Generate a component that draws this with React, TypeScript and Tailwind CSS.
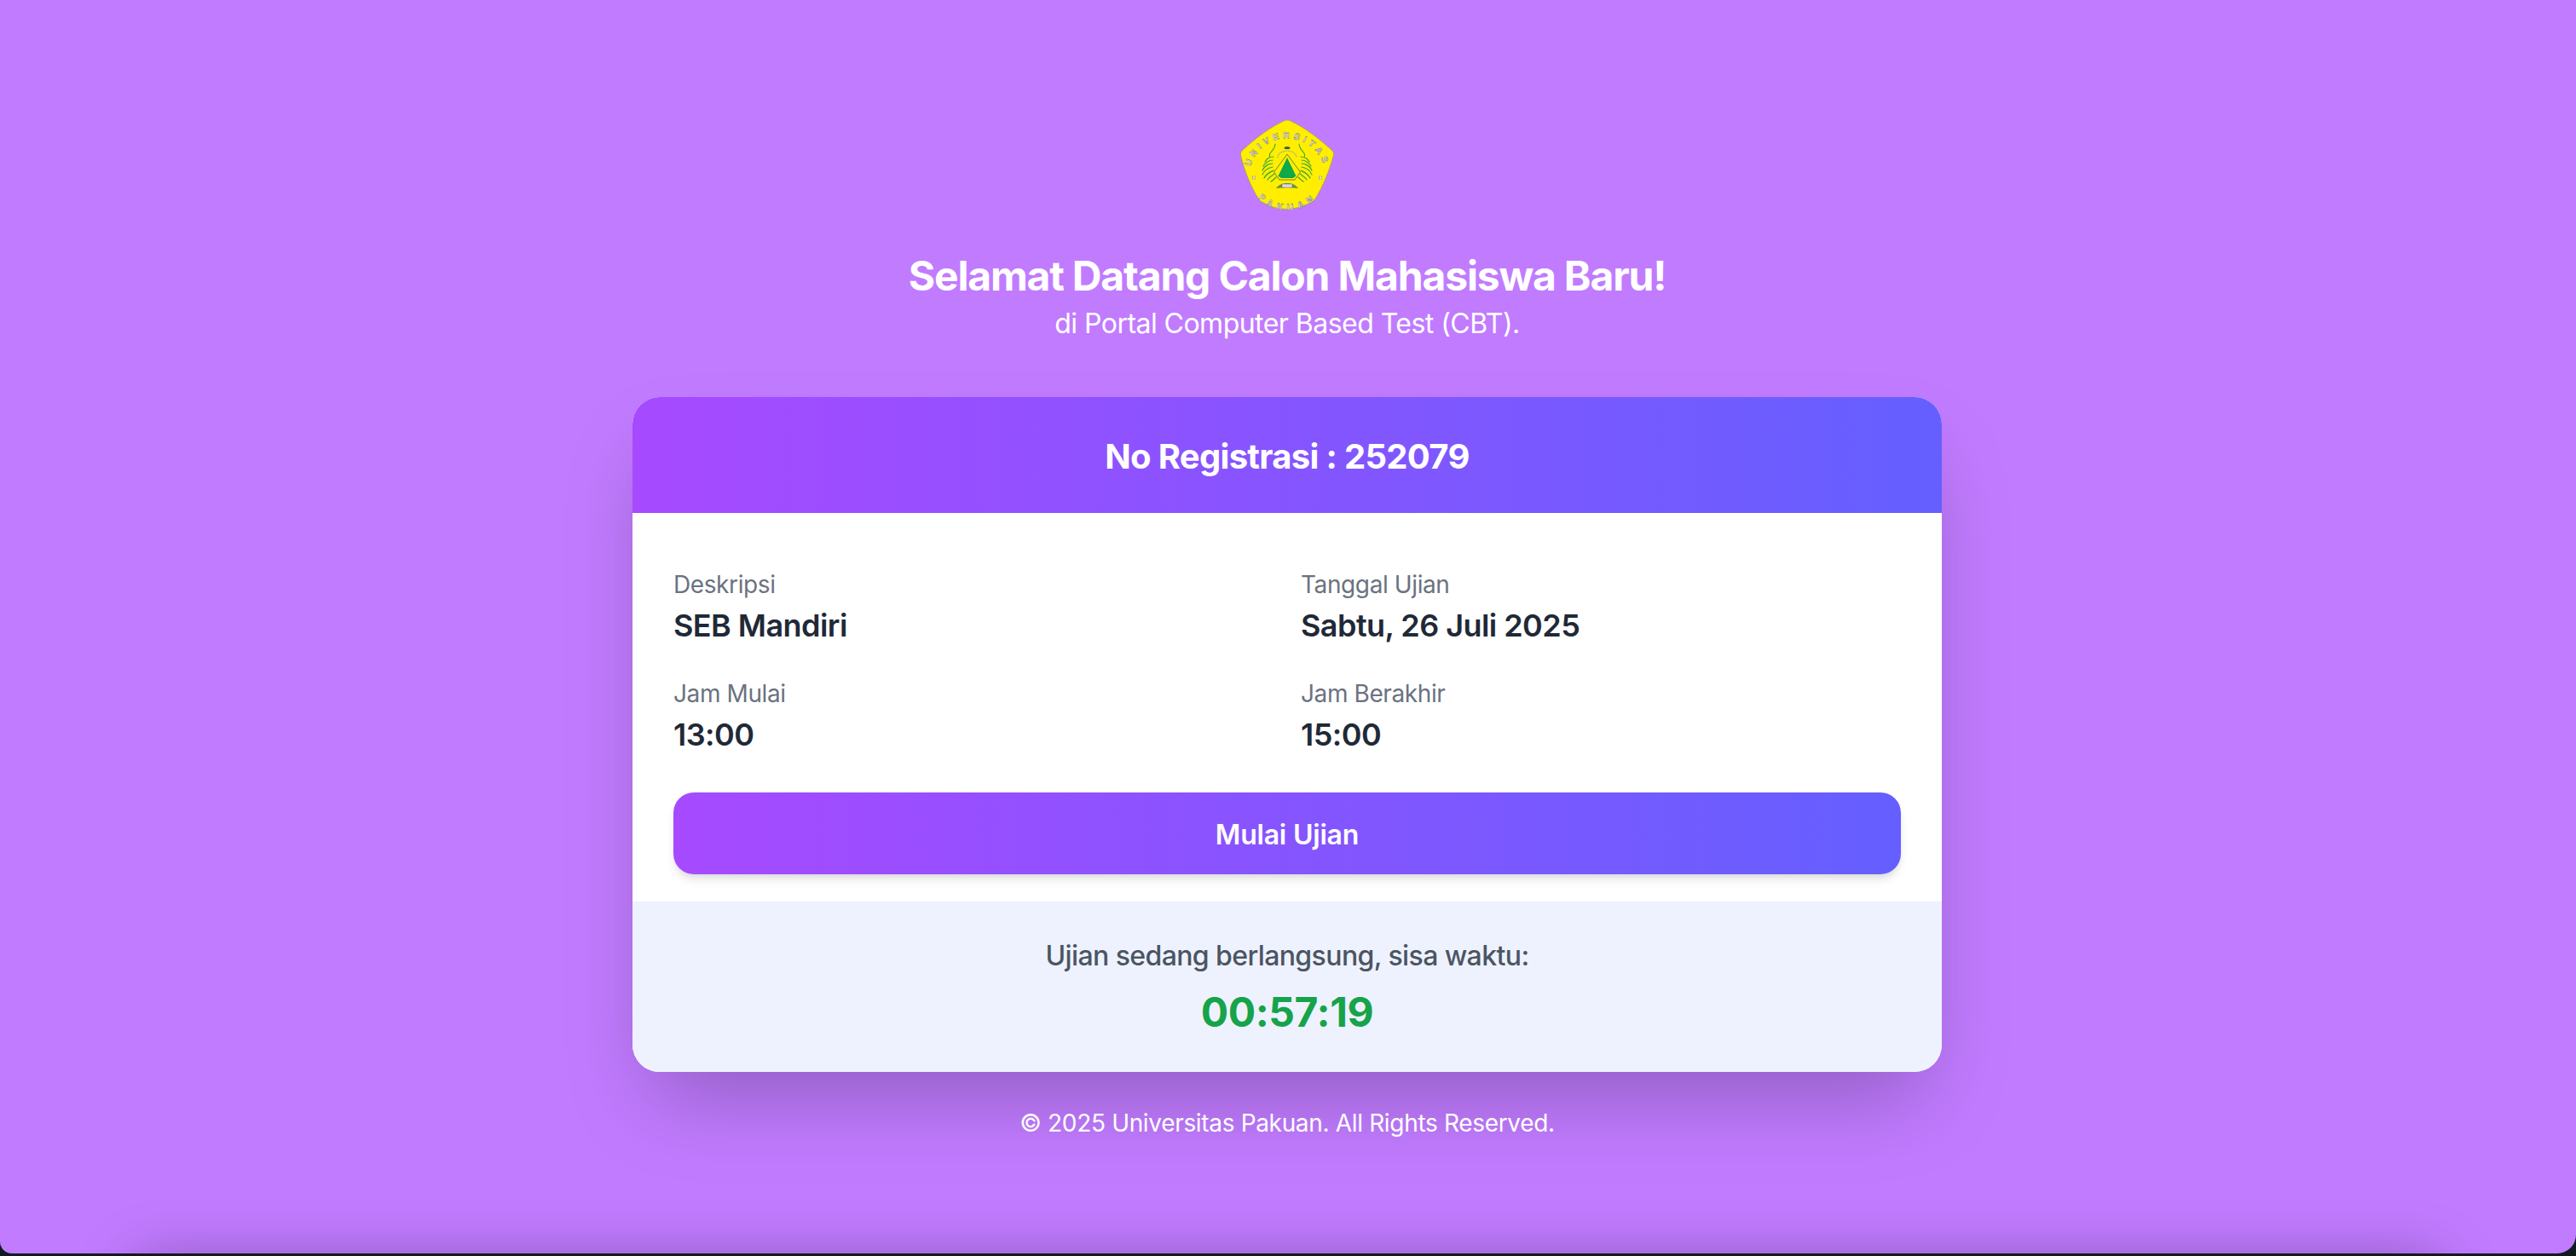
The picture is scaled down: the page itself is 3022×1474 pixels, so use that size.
import React from "react";

function Wing() {
  return (
    <g fill="none" strokeLinecap="round">
      <path d="M41 29c0 5-4 8-6 11-1 2-1 3 0 4" stroke="#3fa535" strokeWidth="1.100" />
      <path d="M39 44C35 44 31 46 29 50" stroke="#3fa535" strokeWidth="1.200" />
      <path d="M38 48C34 48 29 51 27 55" stroke="#4aa838" strokeWidth="1.200" />
      <path d="M38 52C33 52 28 55 26 60" stroke="#2fa540" strokeWidth="1.200" />
      <path d="M38 56C33 57 28 60 26 65" stroke="#4aa838" strokeWidth="1.200" />
      <path d="M39 60C35 62 30 64 28 69" stroke="#2fa540" strokeWidth="1.200" />
      <path d="M40 64C37 66 34 68 32 71" stroke="#4aa838" strokeWidth="1.200" />
      <path d="M42 68C40 70 38 72 36 73" stroke="#2fa540" strokeWidth="1.200" />
    </g>
  );
}

function Logo() {
  return (
    <svg viewBox="0 0 110 108" className="h-[108px] w-[110px]">
      <path
        d="M50 2.500C53 .5 57 .5 60 2.500 76 10 93 23 107 36c2.500 2.500 3 4 2.200 7-5 18-12 35-21 50-1.500 2.500-3 3.500-5.500 4.500-18 10-38 11-56 0-2.500-1-4-2-5.500-4.500C12 78 5 61 .8 43 0 40 .5 38.500 3 36 17 23 34 10 50 2.500z"
        fill="#ffee00"
        stroke="#a8a838"
        strokeWidth=".8"
      />
      <defs>
        <path id="logo-top" d="M10.500 67A44.500 44.500 0 0 1 99.500 67" />
        <path id="logo-bottom" d="M20 78A40 40 0 0 0 90 78" />
      </defs>
      <text fontFamily="Liberation Sans, sans-serif" fontWeight="700" fontSize="10.500" fill="#f4f4f4" stroke="#555" strokeWidth=".4" letterSpacing="4.300">
        <textPath href="#logo-top" startOffset="50%" textAnchor="middle">
          UNIVERSITAS
        </textPath>
      </text>
      <text fontFamily="Liberation Sans, sans-serif" fontWeight="700" fontSize="10.500" fill="#f4f4f4" stroke="#555" strokeWidth=".4" letterSpacing="3.500" dominantBaseline="hanging">
        <textPath href="#logo-bottom" startOffset="50%" textAnchor="middle">
          PAKUAN
        </textPath>
      </text>
      <rect x="14.500" y="67" width="3" height="3" fill="#eee" stroke="#777" strokeWidth=".5" />
      <rect x="92.500" y="67" width="3" height="3" fill="#eee" stroke="#777" strokeWidth=".5" />
      <Wing />
      <g transform="matrix(-1 0 0 1 110 0)">
        <Wing />
      </g>
      <ellipse cx="55" cy="33.500" rx="3.500" ry="1.600" fill="#33603f" />
      <path d="M44 45a11 8 0 0 1 22 0" fill="none" stroke="#999" strokeWidth="1.400" strokeDasharray="1 1" />
      <path d="M55 41 70.500 62 64 71H46l-6.500-9z" fill="#ffee00" stroke="#5c7a2c" strokeWidth=".9" />
      <path d="M55 45 65.500 66.500 62 69H48l-3.500-2.500z" fill="#0fa84a" />
      <path d="M42 81c3-4 7-6 13-6s10 2 13 6c-4 0-8-1-13-1s-9 1-13 1z" fill="#6f8f3a" />
      <path d="M49 76h12v4H49z" fill="#ddd" stroke="#666" strokeWidth=".5" />
    </svg>
  );
}

function Field({ label, value }: { label: string; value: string }) {
  return (
    <div>
      <p className="text-[28px] leading-[40px] tracking-[-0.4px] text-[#6b7280]">{label}</p>
      <p className="text-[36px] leading-[56px] font-semibold tracking-[-0.55px] text-[#1f2937]">{value}</p>
    </div>
  );
}

export default function App() {
  return (
    <div className="h-[1474px] w-[3022px] overflow-hidden bg-[#111a20] font-['Inter',sans-serif]">
      <div className="relative flex h-[1471px] flex-col items-center overflow-hidden rounded-br-[22px] rounded-bl-[14px] bg-[#c17bff] pt-[140px] pr-[2px] text-white">
        <Logo />
        <h1 className="mt-[44px] text-[48px] leading-[64px] font-bold tracking-[-1.17px]">
          Selamat Datang Calon Mahasiswa Baru!
        </h1>
        <p className="text-[32px] leading-[48px] tracking-[-0.53px]">di Portal Computer Based Test (CBT).</p>

        <div className="mt-[62px] w-[1536px] overflow-hidden rounded-[32px] bg-white shadow-[0_50px_100px_-24px_rgba(0,0,0,0.25)]">
          <div className="flex h-[136px] items-center justify-center bg-linear-to-r/srgb from-[#a74aff] to-[#655fff] pt-[3px] text-[40px] font-bold tracking-[-0.7px]">
            No Registrasi : 252079
          </div>
          <div className="px-[48px] pt-[64px] pb-[32px]">
            <div className="grid grid-cols-2 gap-x-[32px] gap-y-[32px]">
              <Field label="Deskripsi" value="SEB Mandiri" />
              <Field label="Tanggal Ujian" value="Sabtu, 26 Juli 2025" />
              <Field label="Jam Mulai" value="13:00" />
              <Field label="Jam Berakhir" value="15:00" />
            </div>
            <button className="mt-[40px] h-[96px] w-full rounded-[24px] bg-linear-to-r/srgb from-[#a74aff] to-[#655fff] pt-[3px] text-[32px] font-semibold tracking-[-0.2px] text-white shadow-[0_8px_12px_-2px_rgba(0,0,0,0.1),0_4px_8px_-4px_rgba(0,0,0,0.1)]">
              Mulai Ujian
            </button>
          </div>
          <div className="bg-[#eef2ff] pt-[40px] pb-[38px] text-center">
            <p className="text-[32px] leading-[48px] font-medium tracking-[-0.6px] text-[#4b5563]">
              Ujian sedang berlangsung, sisa waktu:
            </p>
            <p className="mt-[10px] text-[48px] leading-[64px] font-bold tracking-[-0.4px] text-[#16a34a]">00:57:19</p>
          </div>
        </div>

        <p className="mt-[40px] text-[28px] leading-[40px] tracking-[-0.33px]">
          © 2025 Universitas Pakuan. All Rights Reserved.
        </p>

        <div className="absolute top-[1500px] right-[180px] left-[180px] h-[40px] shadow-[0_0_70px_20px_rgba(0,0,0,0.3)]" />
      </div>
    </div>
  );
}
